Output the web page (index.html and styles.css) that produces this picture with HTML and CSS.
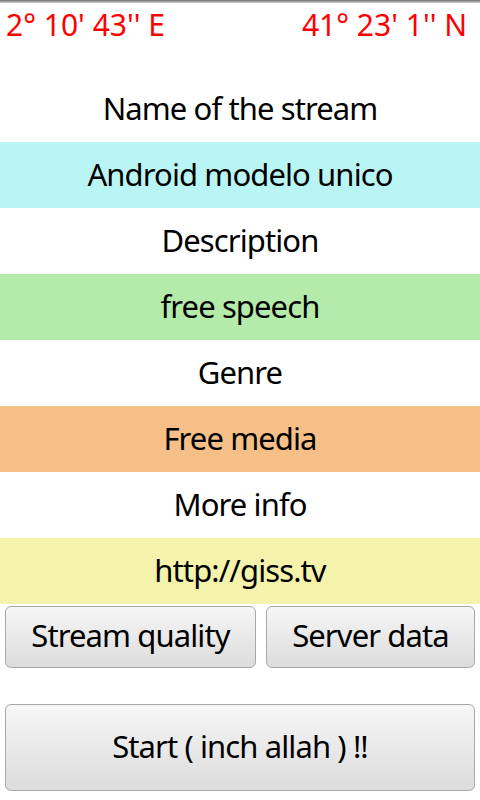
FILE: index.html
```html
<!DOCTYPE html>
<html>
    <head>
        <title>Stream</title>
        <link rel="stylesheet" href="styles.css">
    </head>
    <body>
        <div class="topline"></div>
        <div class="coords">
            <span>2° 10' 43'' E</span>
            <span>41° 23' 1'' N</span>
        </div>
        <div class="row">Name of the stream</div>
        <div class="row cyan">Android modelo unico</div>
        <div class="row">Description</div>
        <div class="row green">free speech</div>
        <div class="row">Genre</div>
        <div class="row orange">Free media</div>
        <div class="row">More info</div>
        <div class="row yellow">http://giss.tv</div>
        <div class="buttons">
            <button class="btn">Stream quality</button>
            <button class="btn">Server data</button>
        </div>
        <button class="btn start">Start ( inch allah ) !!</button>
    </body>
</html>
```
FILE: styles.css
```css
body{
  margin:0;
  background:#fff;
  font-family:"Noto Sans","Open Sans",sans-serif;
  color:#000;
}
.topline{
  height:3px;
  background:linear-gradient(#6e6e6e,#d4d4d4);
}
.coords{
  display:flex;
  justify-content:space-between;
  height:73px;
  padding:2px 13px 0 6px;
  box-sizing:border-box;
  color:#ff0000;
  font-size:30px;
  line-height:40px;
}
.row{
  height:66px;
  line-height:64px;
  text-align:center;
  font-size:31px;
  letter-spacing:-0.9px;
}
.cyan{
  background:#b9f5f5;
}
.green{
  background:#b5ebaa;
}
.orange{
  background:#f5bf87;
}
.yellow{
  background:#f5f2ab;
}
.buttons{
  display:flex;
  gap:10px;
  margin:2px 5px 0;
}
.btn{
  flex:1 1 auto;
  height:62px;
  padding:0 4px 4px;
  border:1px solid #a8a8a8;
  border-radius:6px;
  background:linear-gradient(#f6f6f6,#dcdcdc);
  font-family:"Noto Sans","Open Sans",sans-serif;
  font-size:31px;
  letter-spacing:-0.9px;
  white-space:nowrap;
  color:#000;
}
.start{
  display:block;
  width:470px;
  height:87px;
  margin:36px 5px 0;
}
```
